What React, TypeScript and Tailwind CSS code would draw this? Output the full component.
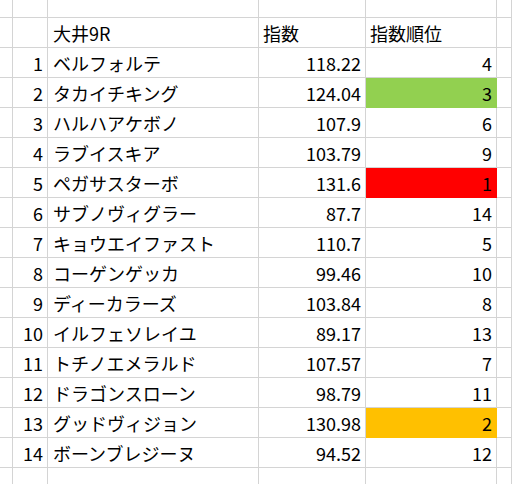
import React from 'react';

type Row = {
  no: number;
  name: string;
  score: string;
  rank: number;
  fill?: string;
};

const rows: Row[] = [
  { no: 1, name: 'ベルフォルテ', score: '118.22', rank: 4 },
  { no: 2, name: 'タカイチキング', score: '124.04', rank: 3, fill: 'bg-[#92d050] border-[#92d050]' },
  { no: 3, name: 'ハルハアケボノ', score: '107.9', rank: 6 },
  { no: 4, name: 'ラブイスキア', score: '103.79', rank: 9 },
  { no: 5, name: 'ペガサスターボ', score: '131.6', rank: 1, fill: 'bg-[#ff0000] border-[#ff0000]' },
  { no: 6, name: 'サブノヴィグラー', score: '87.7', rank: 14 },
  { no: 7, name: 'キョウエイファスト', score: '110.7', rank: 5 },
  { no: 8, name: 'コーゲンゲッカ', score: '99.46', rank: 10 },
  { no: 9, name: 'ディーカラーズ', score: '103.84', rank: 8 },
  { no: 10, name: 'イルフェソレイユ', score: '89.17', rank: 13 },
  { no: 11, name: 'トチノエメラルド', score: '107.57', rank: 7 },
  { no: 12, name: 'ドラゴンスローン', score: '98.79', rank: 11 },
  { no: 13, name: 'グッドヴィジョン', score: '130.98', rank: 2, fill: 'bg-[#ffc000] border-[#ffc000]' },
  { no: 14, name: 'ボーンブレジーヌ', score: '94.52', rank: 12 },
];

// plain grid cell, borders on right and bottom like sheet gridlines
const cell = 'h-[30px] border-r border-b border-[#d4d4d4] flex items-center overflow-hidden whitespace-nowrap';

const App: React.FC = () => {
  return (
    <div
      className="w-[512px] h-[484px] overflow-hidden bg-white text-black text-[18px] leading-none"
      style={{ fontFamily: '"Noto Sans CJK JP", "Noto Sans", sans-serif' }}
    >
      <div className="grid grid-cols-[13px_35px_211px_107px_131px_15px]">
        {/* top partial row */}
        {[0, 1, 2, 3, 4, 5].map((i) => (
          <div key={i} className="h-[18px] border-r border-b border-[#d4d4d4]" />
        ))}

        {/* header */}
        <div className={cell} />
        <div className={cell} />
        <div className={`${cell} pl-[5px]`}>大井9R</div>
        <div className={`${cell} pl-[4px]`}>指数</div>
        <div className={`${cell} pl-[4px]`}>指数順位</div>
        <div className={cell} />

        {rows.map((r) => (
          <React.Fragment key={r.no}>
            <div className={cell} />
            <div className={`${cell} justify-end pr-[4px]`}>{r.no}</div>
            <div className={`${cell} pl-[5px]`}>{r.name}</div>
            <div className={`${cell} justify-end pr-[4px]`}>{r.score}</div>
            <div
              className={`h-[30px] border-r border-b flex items-center justify-end pr-[4px] ${
                r.fill ?? 'border-[#d4d4d4]'
              }`}
            >
              {r.rank}
            </div>
            <div className={cell} />
          </React.Fragment>
        ))}

        {/* bottom partial row */}
        {[0, 1, 2, 3, 4, 5].map((i) => (
          <div key={`b${i}`} className={cell} />
        ))}
      </div>
    </div>
  );
};

export default App;
